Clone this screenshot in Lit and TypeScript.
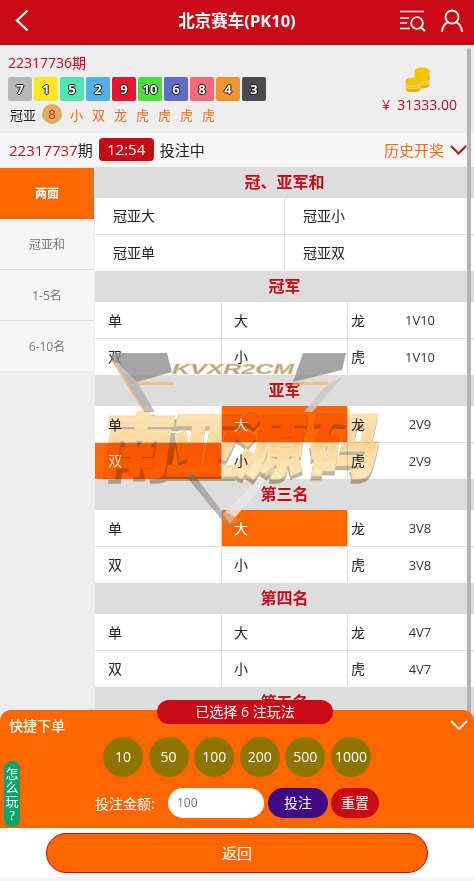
import { LitElement, html, css, svg } from "lit";
import { customElement } from "lit/decorators.js";

const BALLS: [string, string][] = [
  ["7", "#b7b7b7"], ["1", "#fde725"], ["5", "#4fe6b4"], ["2", "#4fb0e6"], ["9", "#e4172f"],
  ["10", "#4ade3a"], ["6", "#5f6cc8"], ["8", "#f26a7c"], ["4", "#f5942e"], ["3", "#4a4b4e"],
];
const SUMMARY = ["小", "双", "龙", "虎", "虎", "虎", "虎"];
const SECTIONS: [string, string, boolean, boolean][] = [
  ["冠军", "1V10", false, false],
  ["亚军", "2V9", true, true],
  ["第三名", "3V8", true, false],
  ["第四名", "4V7", false, false],
];

@customElement("app-root")
export class AppRoot extends LitElement {
  static styles = css`
    :host { display: block; width: 474px; height: 881px; overflow: hidden; position: relative;
      font-family: "Open Sans", "Noto Sans CJK SC", sans-serif; background: #eee; color: #222; }
    .page { height: 881px; display: flex; flex-direction: column; }
    .hdr { height: 45px; flex: none; background: #c90a16; color: #fff; display: flex; align-items: center; justify-content: space-between; padding: 0 11px 4px 15px; box-sizing: border-box; position: relative; }
    .hdr h1 { position: absolute; left: 0; right: 0; top: 0; text-align: center; margin: 0; font-size: 16.5px; font-weight: 700; line-height: 42px; }
    .hdr .icons { display: flex; gap: 15px; align-items: center; }
    .hdr svg { display: block; position: relative; }
    .info { height: 88px; flex: none; background: #eee; display: flex; justify-content: space-between; padding: 8px 17px 0 8px; box-sizing: border-box; }
    .period { font-size: 14px; line-height: 20px; color: #c90a16; }
    .balls { display: flex; gap: 2px; margin-top: 4px; }
    .ball { width: 24px; height: 24px; border-radius: 2px; display: flex; align-items: center; justify-content: center; color: #fff; font-size: 13px; font-weight: 700;
      text-shadow: -1px 0 #111, 1px 0 #111, 0 -1px #111, 0 1px #111; }
    .sum { display: flex; align-items: center; margin-top: 2px; font-size: 13px; height: 22px; }
    .sum .lab { margin: 0 6px 0 2px; }
    .sum .c { width: 20px; height: 20px; border-radius: 50%; background: #dfad5e; color: #d8222a; display: flex; align-items: center; justify-content: center; margin-right: 8px; font-size: 13px; }
    .sum .t { color: #ff6a13; width: 22px; font-size: 13px; }
    .money { display: flex; flex-direction: column; align-items: center; padding-top: 14px; }
    .money svg { display: block; margin-right: 3px; }
    .money .amt { color: #c90a16; font-size: 14px; line-height: 20px; margin-top: 3px; white-space: pre; }
    .timer { height: 34px; flex: none; background: #f7f7f7; display: flex; align-items: center; padding: 0 7px 1px 9px; box-sizing: border-box; font-size: 15px; }
    .timer .p { color: #c90a16; }
    .timer .tm { background: #c90a16; color: #fff; width: 55px; height: 23px; line-height: 23px; text-align: center; border-radius: 4px; margin: 0 6px 0 6px; }
    .timer .hist { margin-left: auto; color: #ff6a13; display: flex; align-items: center; gap: 6px; }
    .main { flex: 1; display: flex; min-height: 0; position: relative; }
    .side { width: 94px; flex: none; margin-top: 1px; }
    .side div { height: 50px; line-height: 52px; text-align: center; font-size: 12px; color: #777; background: #f6f6f6; border-bottom: 1px solid #d8d8d8; }
    .side div:last-child { border-bottom: none; }
    .side .on { background: #ff6600; color: #fff; font-weight: 700; border-bottom: none; height: 51px; }
    .content { width: 379px; margin-left: 1px; flex: none; background: #fff; overflow: hidden; }
    .title { height: 31px; line-height: 30px; background: #ddd; color: #c90a16; text-align: center; font-size: 16px; font-weight: 700; }
    .two { display: grid; grid-template-columns: 190px 1fr; }
    .two div { height: 36px; line-height: 36px; padding-left: 18px; font-size: 14px; box-sizing: border-box; border-bottom: 1px solid #ddd; }
    .two div:nth-child(odd) { border-right: 1px solid #ddd; }
    .two div:nth-child(n+3) { border-bottom: none; }
    .two div:nth-child(-n+2) { height: 37px; }
    .grid { display: grid; grid-template-columns: 127px 126px 126px; }
    .cell { height: 37px; line-height: 37px; font-size: 14px; box-sizing: border-box; border-bottom: 1px solid #ddd; border-right: 1px solid #ddd; padding-left: 13px; }
    .cell.r2 { height: 36px; line-height: 36px; border-bottom: none; }
    .cell.mid { padding-left: 12px; }
    .cell.last { border-right: none; padding-left: 3px; display: flex; }
    .cell.last span:first-child { width: 44px; }
    .cell.last span:last-child { width: 50px; text-align: center; color: #333; font-size: 13px; }
    .cell.on { background: #ff6600; color: #fff; }
    .scroll { position: absolute; left: 467px; top: 48px; width: 4px; height: 770px; background: #b4b4b4; border-radius: 2px; }
    .mark { position: absolute; left: 90px; top: 348px; width: 300px; height: 190px; pointer-events: none; }
    .mark .big { font-family: "Noto Sans CJK SC", sans-serif; font-weight: 900; font-size: 71px; }
    .mark .logo { font-family: "Liberation Sans", sans-serif; font-style: italic; font-weight: 700; font-size: 15px; }
    .bigwrap { mix-blend-mode: multiply; }
    .panel { position: absolute; left: 0; top: 710px; width: 474px; height: 118px; background: #ff6600; border-radius: 11px 11px 0 0; color: #fff; }
    .sel { position: absolute; left: 157px; top: -10px; width: 176px; height: 24px; line-height: 24px; border-radius: 12px; background: #c90a16; text-align: center; font-size: 14px; }
    .quick { position: absolute; left: 9px; top: 7px; font-size: 14px; line-height: 18px; font-weight: 500; }
    .close { position: absolute; left: 450px; top: 9px; }
    .chips { position: absolute; left: 103px; top: 27px; display: flex; gap: 5.6px; }
    .chip { width: 40px; height: 40px; border-radius: 50%; background: #8f7500; text-align: center; line-height: 40px; font-size: 14px; }
    .how { position: absolute; left: 4px; top: 51px; width: 16px; height: 66px; border-radius: 8px; background: #0aa567; font-size: 13px; line-height: 14px; text-align: center; padding-top: 5px; box-sizing: border-box; }
    .how span { display: block; }
    .form { position: absolute; left: 95px; top: 78px; display: flex; align-items: center; height: 30px; font-size: 14px; }
    .form .lab { width: 73px; white-space: nowrap; }
    .form .inp { width: 96px; height: 30px; line-height: 30px; border-radius: 15px; background: #fff; color: #757575; padding-left: 9px; box-sizing: border-box; font-size: 12px; }
    .btn { height: 30px; line-height: 30px; border-radius: 15px; text-align: center; font-size: 14px; }
    .btn.a { width: 60px; background: #3f0a85; margin-left: 4px; }
    .btn.b { width: 48px; background: #c90a16; margin-left: 3px; }
    .foot { position: absolute; left: 0; top: 828px; width: 474px; height: 53px; background: #fff; }
    .foot .back { position: absolute; left: 46px; top: 5px; width: 382px; height: 40px; box-sizing: border-box; border: 1px solid #c90a16; border-radius: 20px; background: #ff6600; color: #fff; text-align: center; line-height: 38px; font-size: 15px; }
    .foot .strip { position: absolute; left: 0; right: 0; bottom: 0; height: 4px; background: #f0f4f5; }
  `;

  private coin(x: number, y: number) {
    return svg`<g>
      <ellipse cx="${x}" cy="${y + 8}" rx="7.5" ry="3.5" fill="#e2b10f"/>
      <rect x="${x - 7.5}" y="${y}" width="15" height="8" fill="#f0c010"/>
      <ellipse cx="${x}" cy="${y}" rx="7.5" ry="3.5" fill="#f4c400"/>
      <path d="M${x - 7.5} ${y + 3.5}q7.5 3.5 15 0M${x - 7.5} ${y + 6}q7.5 3.5 15 0" fill="none" stroke="#fbe58a" stroke-width=".8"/>
    </g>`;
  }

  private sec(name: string, vs: string, big: boolean, dbl: boolean) {
    return html`<div class="title">${name}</div>
      <div class="grid">
        <div class="cell">单</div><div class="cell mid ${big ? "on" : ""}">大</div>
        <div class="cell last"><span>龙</span><span>${vs}</span></div>
        <div class="cell r2 ${dbl ? "on" : ""}">双</div><div class="cell r2 mid">小</div>
        <div class="cell r2 last"><span>虎</span><span>${vs}</span></div>
      </div>`;
  }

  render() {
    const chars = "0 67 132 207";
    return html`<div class="page">
      <div class="hdr">
        <svg width="14" height="24" viewBox="0 0 14 24"><path d="M12.500 1.500 2 11.500l10.500 10" fill="none" stroke="#fff" stroke-width="2.200"/></svg>
        <h1>北京赛车(PK10)</h1>
        <div class="icons">
          <svg width="26" height="22" viewBox="0 0 26 22"><path d="M0 1.500h24M0 8h9M0 13h7M0 18.500h10" fill="none" stroke="#fff" stroke-width="1.700"/><circle cx="17" cy="13" r="5.800" fill="none" stroke="#fff" stroke-width="1.800"/><path d="m21 17.500 4 3.500" stroke="#fff" stroke-width="2"/></svg>
          <svg width="22" height="24" viewBox="0 0 22 24"><circle cx="11" cy="8" r="6.500" fill="none" stroke="#fff" stroke-width="1.800"/><path d="M1 23c0-6 4-9.500 7-10M21 23c0-6-4-9.500-7-10" fill="none" stroke="#fff" stroke-width="1.800"/></svg>
        </div>
      </div>
      <div class="info">
        <div>
          <div class="period">22317736期</div>
          <div class="balls">${BALLS.map(([n, c]) => html`<div class="ball" style="background:${c}">${n}</div>`)}</div>
          <div class="sum"><span class="lab">冠亚</span><span class="c">8</span>${SUMMARY.map((s) => html`<span class="t">${s}</span>`)}</div>
        </div>
        <div class="money">
          <svg width="26" height="25" viewBox="0 0 26 25">${this.coin(17, 4)}${this.coin(17, 10)}${this.coin(8, 14)}</svg>
          <div class="amt">¥  31333.00</div>
        </div>
      </div>
      <div class="timer">
        <span class="p">22317737</span><span>期</span><span class="tm">12:54</span><span>投注中</span>
        <span class="hist">历史开奖<svg width="17" height="10" viewBox="0 0 17 10"><path d="m1 1 7.500 7.500L16 1" fill="none" stroke="#c90a16" stroke-width="2"/></svg></span>
      </div>
      <div class="main">
        <div class="side"><div class="on">两面</div><div>冠亚和</div><div>1-5名</div><div>6-10名</div></div>
        <div class="content">
          <div class="title">冠、亚军和</div>
          <div class="two"><div>冠亚大</div><div>冠亚小</div><div>冠亚单</div><div>冠亚双</div></div>
          ${SECTIONS.map(([n, v, b, d]) => this.sec(n, v, b, d))}
          <div class="title">第五名</div>
        </div>
      </div>
      <div class="scroll"></div>
      <svg class="mark" viewBox="90 348 300 190">
        <defs>
          <linearGradient id="g" x1="0" x2="0" y1="0" y2="1"><stop offset="0" stop-color="#f8efd0"/><stop offset=".55" stop-color="#fbd596"/><stop offset="1" stop-color="#fff6d6"/></linearGradient>
        </defs>
        <path d="M112 353h55l5 19-35 10-25-24z" fill="#8f8f8f" opacity=".8"/>
        <path d="M112 358l25 24 18 30-10 0z" fill="#a9a9a9" opacity=".75"/>
        <path d="M112 360l33 52" stroke="#f3b67a" stroke-width="1.500" fill="none"/>
        <path d="M137 382h36l1 3-36 0z" fill="#eeb75e" opacity=".7"/>
        <path d="M303 353h43l-4 17-49 12z" fill="#8f8f8f" opacity=".8"/>
        <path d="M343 377l-31 35h-8l16-20 10-9z" fill="#c9c9c9" opacity=".85"/>
        <path d="M293 382h36l-1 3h-36z" fill="#eeb75e" opacity=".7"/>
        <path d="M193 473l30 40 15 7-8 6-4-1-41-50z" fill="#8a8a8a" opacity=".6"/>
        <path d="M270 468l-47 46 7 9 46-52z" fill="#e6e6e6" opacity=".85"/>
        <path d="M223 510l15 9-7 6-8-4z" fill="#f08a3c" opacity=".6"/>
        <text class="logo" x="172" y="374" textLength="122" lengthAdjust="spacingAndGlyphs" fill="#a9a08c" stroke="#e8cf98" stroke-width=".7">KVXR2CM</text>
        <g class="bigwrap">
          <g transform="translate(99 472) skewX(-8)">
            <text class="big" x="${chars}" y="4" dx="6" fill="#b7a78e" stroke="#b7a78e" stroke-width="2.500" opacity=".85">南亚源码</text>
            <text class="big" x="${chars}" y="0" fill="url(#g)" stroke="#f8dfae" stroke-width="2">南亚源码</text>
          </g>
        </g>
      </svg>
      <div class="panel">
        <div class="sel">已选择 6 注玩法</div>
        <div class="quick">快捷下单</div>
        <svg class="close" width="18" height="12" viewBox="0 0 18 12"><path d="m1 2 8 8 8-8" fill="none" stroke="#fff" stroke-width="1.800"/></svg>
        <div class="chips">${["10", "50", "100", "200", "500", "1000"].map((c) => html`<div class="chip">${c}</div>`)}</div>
        <div class="how"><span>怎</span><span>么</span><span>玩</span><span>?</span></div>
        <div class="form"><span class="lab">投注金额:</span><span class="inp">100</span><span class="btn a">投注</span><span class="btn b">重置</span></div>
      </div>
      <div class="foot"><div class="back">返回</div><div class="strip"></div></div>
    </div>`;
  }
}
